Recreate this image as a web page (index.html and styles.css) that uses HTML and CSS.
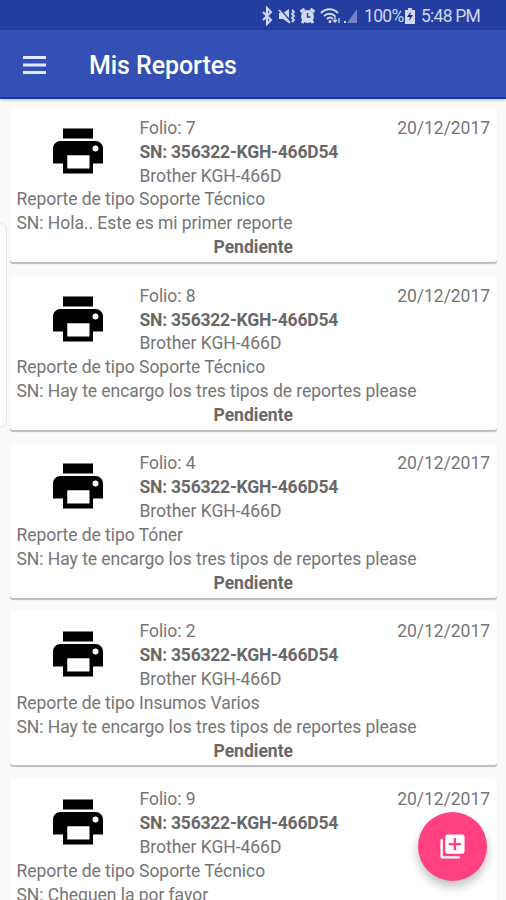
FILE: index.html
```html
<!DOCTYPE html>
<html lang="es">
<head>
<meta charset="utf-8">
<title>Mis Reportes</title>
<link rel="stylesheet" href="styles.css">
</head>
<body>
<svg width="0" height="0" class="defs"><defs>
<symbol id="printer" viewBox="0 0 24 24"><path d="M19 8H5c-1.660 0-3 1.340-3 3v6h4v4h12v-4h4v-6c0-1.660-1.340-3-3-3zm-2.400 11H7.700v-5.300h8.900V19zM19 12.200a1.200 1.200 0 1 1 0-2.400 1.200 1.200 0 0 1 0 2.400zM18 3H6v4h12V3z"/></symbol>
</defs></svg>
<div class="status">
<svg class="status-icons" width="98" height="20" viewBox="0 0 98 20">
<path d="M2 6l8 8-4 4V2l4 4-8 8" fill="none" stroke="currentColor" stroke-width="2.100"/>
<path d="M18 7h4l6-4v14l-6-4h-4z"/>
<path d="M19 3l12 14" stroke="#243da0" stroke-width="1.500"/><path d="M18 4l11 13" stroke="currentColor" stroke-width="1.700"/>
<path d="M31 4l2 2-2 2 2 2-2 2 2 2-2 2" fill="none" stroke="currentColor" stroke-width="1.800"/>
<circle cx="46.500" cy="10.500" r="6.500"/><path d="M39.500 6l4-3M53.500 6l-4-3M41 17l2-3M52 17l-2-3" stroke="currentColor" stroke-width="3"/><path d="M46.500 7v4h3" fill="none" stroke="#243da0" stroke-width="1.400"/>
<path d="M60 7c5-5 12-5 17 0M63 10c3-3 8-3 11 0M66 13c2-2 4-2 6 0" fill="none" stroke="currentColor" stroke-width="2"/><circle cx="69" cy="15.500" r="1.500"/><path d="M74 10v6M72 14l2 2 2-2M78 17v-5" fill="none" stroke="currentColor" stroke-width="1.300"/>
<path d="M83 15h2v2h-2z"/><path d="M96 3v14H86z" opacity=".45"/>
</svg>
<span class="percent">100%</span>
<svg class="battery" width="10" height="16" viewBox="0 0 10 16"><path d="M3 0h4v2h3v14H0V2h3z"/><path d="M6 3L2 9h3l-1 4 4-6H5z" fill="#152a72"/></svg>
<span class="clock">5:48 PM</span>
</div>
<header class="toolbar">
<svg width="23" height="18" viewBox="0 0 23 18"><path d="M0 1.500h23M0 9h23M0 16.500h23" stroke="currentColor" stroke-width="3"/></svg>
<h1>Mis Reportes</h1>
</header>
<main class="list">
<article class="card"><div class="top"><svg class="printer"><use href="#printer"/></svg><div class="info"><div class="row"><span>Folio: 7</span><time>20/12/2017</time></div><strong>SN: 356322-KGH-466D54</strong><span class="model">Brother KGH-466D</span></div></div><p class="type">Reporte de tipo Soporte Técnico</p><p class="note">SN: Hola.. Este es mi primer reporte</p><p class="state">Pendiente</p></article>
<article class="card"><div class="top"><svg class="printer"><use href="#printer"/></svg><div class="info"><div class="row"><span>Folio: 8</span><time>20/12/2017</time></div><strong>SN: 356322-KGH-466D54</strong><span class="model">Brother KGH-466D</span></div></div><p class="type">Reporte de tipo Soporte Técnico</p><p class="note">SN: Hay te encargo los tres tipos de reportes please</p><p class="state">Pendiente</p></article>
<article class="card"><div class="top"><svg class="printer"><use href="#printer"/></svg><div class="info"><div class="row"><span>Folio: 4</span><time>20/12/2017</time></div><strong>SN: 356322-KGH-466D54</strong><span class="model">Brother KGH-466D</span></div></div><p class="type">Reporte de tipo Tóner</p><p class="note">SN: Hay te encargo los tres tipos de reportes please</p><p class="state">Pendiente</p></article>
<article class="card"><div class="top"><svg class="printer"><use href="#printer"/></svg><div class="info"><div class="row"><span>Folio: 2</span><time>20/12/2017</time></div><strong>SN: 356322-KGH-466D54</strong><span class="model">Brother KGH-466D</span></div></div><p class="type">Reporte de tipo Insumos Varios</p><p class="note">SN: Hay te encargo los tres tipos de reportes please</p><p class="state">Pendiente</p></article>
<article class="card"><div class="top"><svg class="printer"><use href="#printer"/></svg><div class="info"><div class="row"><span>Folio: 9</span><time>20/12/2017</time></div><strong>SN: 356322-KGH-466D54</strong><span class="model">Brother KGH-466D</span></div></div><p class="type">Reporte de tipo Soporte Técnico</p><p class="note">SN: Chequen la por favor</p></article>
</main>
<div class="edge-handle"></div>
<button class="fab" aria-label="Agregar reporte"><svg width="29" height="29" viewBox="0 0 24 24"><path d="M4 6H2v14c0 1.100.9 2 2 2h14v-2H4V6zm16-4H8c-1.100 0-2 .9-2 2v12c0 1.100.9 2 2 2h12c1.100 0 2-.9 2-2V4c0-1.100-.9-2-2-2zm-1 9h-4v4h-2v-4H9V9h4V5h2v4h4v2z"/></svg></button>
</body>
</html>
```
FILE: styles.css
```css
* { box-sizing: border-box; }
body {
  margin: 0;
  height: 900px;
  overflow: hidden;
  position: relative;
  display: flex;
  flex-direction: column;
  background: #fafafa;
  color: #757575;
  font-family: Roboto, sans-serif;
}
svg { fill: currentColor; flex: none; }
.defs { position: absolute; }
.status {
  height: 30px;
  flex: none;
  display: flex;
  align-items: center;
  padding: 2px 0 0 261px;
  background: #243da0;
  color: #d0d8f3;
  font-size: 17.500px;
}
.percent { margin-left: 5px; width: 39px; letter-spacing: -0.700px; }
.battery { margin-left: 2px; }
.clock { margin-left: 6px; letter-spacing: -0.750px; white-space: nowrap; }
.toolbar {
  height: 69px;
  flex: none;
  display: flex;
  align-items: center;
  gap: 43px;
  padding: 3px 23px 0;
  background: #3450b5;
  color: #fff;
  border-bottom: 2px solid #173ba5;
  box-shadow: 0 1px 3px rgba(0, 0, 0, .25);
  z-index: 1;
}
.toolbar svg { color: #e2e8fa; }
.toolbar h1 { margin: 0; font-size: 25px; font-weight: 500; letter-spacing: -0.080px; }
.list { display: flex; flex-direction: column; gap: 13.800px; padding: 9px 9px 0 10px; }
.card {
  height: 154px;
  flex: none;
  padding: 8.800px 7px 0 6.500px;
  background: #fff;
  border-radius: 3px;
  box-shadow: 0 1.500px 1px #bcbcbc;
  font-size: 17.500px;
  line-height: 23.900px;
  letter-spacing: -0.040px;
}
.card p { margin: 0; white-space: nowrap; }
.top { display: flex; }
.printer { width: 60px; height: 60px; margin: 4px 31.500px 0; color: #000; }
.info { flex: 1; display: flex; flex-direction: column; height: 71.700px; }
.row { display: flex; justify-content: space-between; }
.card strong { font-weight: 700; color: #686868; letter-spacing: -0.220px; }
.card .state { text-align: center; font-weight: 700; color: #686868; letter-spacing: 0; }
.edge-handle {
  position: absolute;
  left: -12px;
  top: 223px;
  width: 19px;
  height: 205px;
  background: #fcfcfc;
  border: 1px solid #e6e6e6;
  border-radius: 7px;
}
.fab {
  position: absolute;
  left: 418px;
  top: 812px;
  width: 69px;
  height: 69px;
  padding: 0;
  border: 0;
  border-radius: 50%;
  display: flex;
  align-items: center;
  justify-content: center;
  background: #ff4081;
  color: #fff;
  box-shadow: 0 6px 10px rgba(0, 0, 0, .24);
}
```
